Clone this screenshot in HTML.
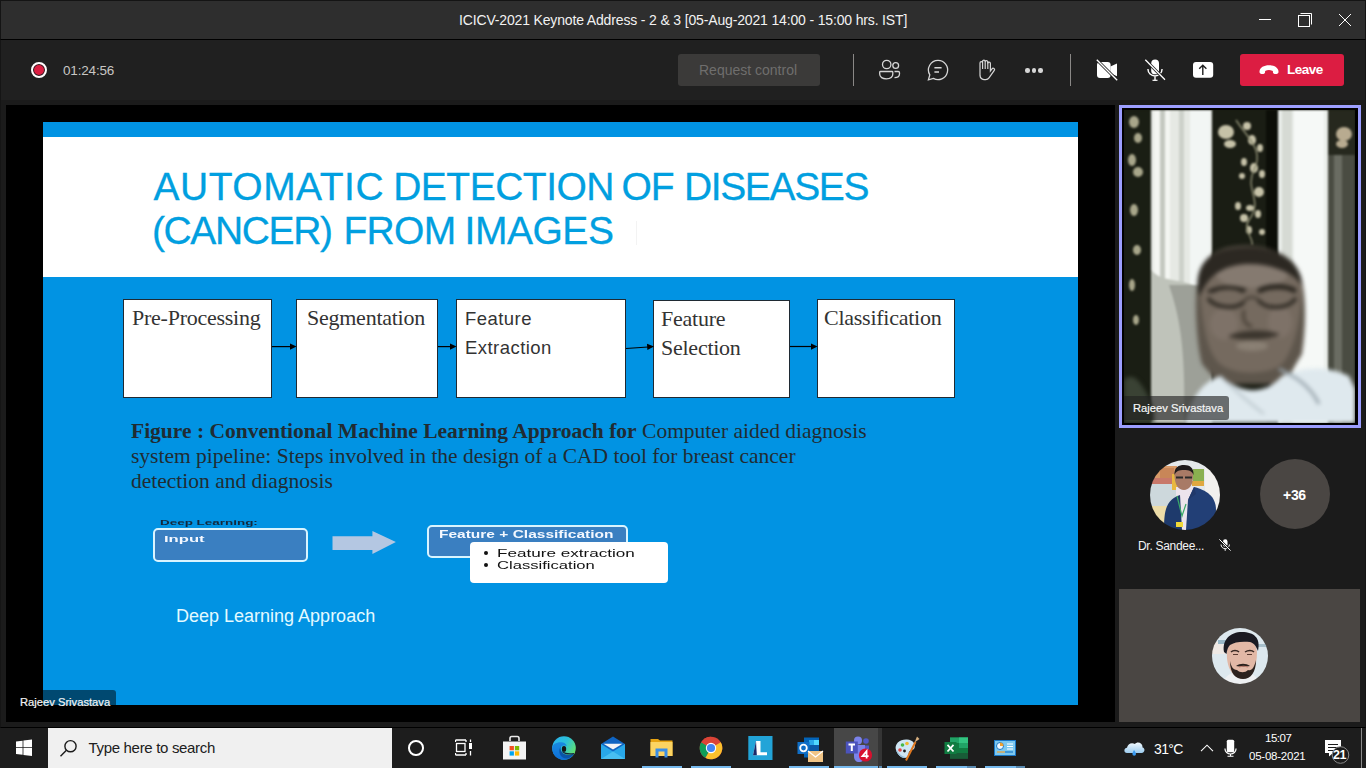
<!DOCTYPE html>
<html><head><meta charset="utf-8">
<style>
*{margin:0;padding:0;box-sizing:border-box}
html,body{width:1366px;height:768px;overflow:hidden;background:#161616;font-family:"Liberation Sans",sans-serif}
.a{position:absolute}
.t{position:absolute;white-space:nowrap;line-height:1}
.sv{font-family:"Liberation Serif",serif}
.ttl{font-size:39px;color:#019fe0;-webkit-text-stroke:0.3px #019fe0}
#titlebar{left:0;top:0;width:1366px;height:40px;background:#2e2e2e;border-top:1px solid #141414;border-left:1px solid #141414;border-right:1px solid #141414;border-bottom:1px solid #000}
#toolbar{left:0;top:40px;width:1366px;height:60px;background:#202020;border-left:1px solid #151515;border-right:1px solid #151515}
#stagewrap{left:0;top:100px;width:1366px;height:628px;background:#1b1b1b;border-left:1px solid #151515;border-right:1px solid #151515;border-bottom:1px solid #000}
#stage{left:6px;top:105px;width:1109px;height:617px;background:#000}
#slide{left:43px;top:122px;width:1035px;height:583px;background:#0193e3;overflow:hidden}
#taskbar{left:0;top:728px;width:1366px;height:40px;background:#1d1d1d}
</style></head><body>

<!-- TITLE BAR -->
<div id="titlebar" class="a"></div>
<div class="t" id="ttl" style="left:459px;top:13px;font-size:14px;letter-spacing:-0.155px;color:#f2f2f2">ICICV-2021 Keynote Address - 2 &amp; 3 [05-Aug-2021 14:00 - 15:00 hrs. IST]</div>
<div class="a" style="left:1259px;top:19px;width:12px;height:1px;background:#fff"></div>
<svg class="a" style="left:1296px;top:12px" width="18" height="17" viewBox="0 0 18 17"><path d="M4.5 1.5 H15.5 V12.5" fill="none" stroke="#fff" stroke-width="1"/><rect x="2.5" y="3.5" width="11" height="11" fill="none" stroke="#fff" stroke-width="1"/></svg>
<svg class="a" style="left:1338px;top:13px" width="14" height="14" viewBox="0 0 14 14"><path d="M1 1 L13 13 M13 1 L1 13" stroke="#fff" stroke-width="1"/></svg>

<!-- TOOLBAR -->
<div id="toolbar" class="a"></div>
<div class="a" style="left:31px;top:62px;width:16px;height:16px;border-radius:50%;border:2px solid #fff;background:#dc1e42;box-shadow:inset 0 0 0 1px #202020"></div>
<div class="t" id="timer" style="left:63px;top:63.5px;font-size:13.5px;letter-spacing:-0.17px;color:#c8c6c4">01:24:56</div>
<div class="a" style="left:678px;top:54px;width:142px;height:32px;border-radius:3px;background:#3b3a39"></div>
<div class="t" id="reqc" style="left:699px;top:63px;font-size:14px;color:#6f6e6d">Request control</div>
<div class="a" style="left:853px;top:54px;width:1px;height:32px;background:#8a8886"></div>
<!-- people -->
<svg class="a" style="left:878px;top:58px" width="24" height="24" viewBox="0 0 24 24" fill="none" stroke="#d6d6d6" stroke-width="1.3">
<circle cx="8.7" cy="6.5" r="4.2"/><circle cx="17.7" cy="7.5" r="2.9"/>
<path d="M2.5 13.5 h11.5 a0.8 0.8 0 0 1 0.8 0.8 v1.8 c0 3 -2.8 4.8 -6.5 4.8 s-6.6 -1.8 -6.6 -4.8 v-1.8 a0.8 0.8 0 0 1 0.8 -0.8z"/>
<path d="M16.5 13.5 h3.7 a1.3 1.3 0 0 1 1.3 1.3 v0.9 c0 2.4 -2 3.9 -5 3.9"/>
</svg>
<!-- chat -->
<svg class="a" style="left:926px;top:58px" width="24" height="24" viewBox="0 0 24 24" fill="none" stroke="#d6d6d6" stroke-width="1.3">
<path d="M12 2.4 a9.6 9.6 0 1 1 -4.6 18 l-5 1.4 l1.4 -4.9 A9.6 9.6 0 0 1 12 2.4z"/>
<path d="M8.4 9.8 h7.2 M8.4 14 h4.6" stroke-width="1.5"/>
</svg>
<!-- hand -->
<svg class="a" style="left:972.5px;top:58px" width="24" height="24" viewBox="0 0 24 24" fill="none" stroke="#d6d6d6" stroke-width="1.2">
<path d="M7 9.5 V5 a1.3 1.3 0 0 1 2.6 0 V3.4 a1.3 1.3 0 0 1 2.6 0 V4 a1.3 1.3 0 0 1 2.6 0 V5.4 a1.3 1.3 0 0 1 2.6 0 V13 l1.6 -2.2 a1.4 1.4 0 0 1 2.3 1.6 l-5.3 7.5 a4 4 0 0 1 -3.3 1.7 H11 a4.5 4.5 0 0 1 -4 -4.2z"/>
<path d="M9.6 5 v6 M12.2 3.5 v7.5 M14.8 4 v7" />
</svg>
<!-- more -->
<div class="a" style="left:1025px;top:68px;width:4.5px;height:4.5px;border-radius:50%;background:#d6d6d6"></div>
<div class="a" style="left:1031.7px;top:68px;width:4.5px;height:4.5px;border-radius:50%;background:#d6d6d6"></div>
<div class="a" style="left:1038.3px;top:68px;width:4.5px;height:4.5px;border-radius:50%;background:#d6d6d6"></div>
<div class="a" style="left:1070px;top:54px;width:1px;height:32px;background:#8a8886"></div>
<!-- camera off -->
<svg class="a" style="left:1095px;top:58px" width="24" height="24" viewBox="0 0 24 24">
<rect x="2" y="3.9" width="13.6" height="16.1" rx="3" fill="#fff"/>
<path d="M15.4 8.5 L22 5.6 V18.2 L15.4 15.3z" fill="#fff"/>
<path d="M1.5 1.5 L22.5 22.5" stroke="#202020" stroke-width="3"/>
<path d="M1.8 1.8 L22.2 22.2" stroke="#fff" stroke-width="1.3"/>
</svg>
<!-- mic off -->
<svg class="a" style="left:1143px;top:58px" width="24" height="24" viewBox="0 0 24 24">
<rect x="8.2" y="1.5" width="7.8" height="14.8" rx="3.9" fill="#fff"/>
<path d="M5 11 v0.5 a7 6.5 0 0 0 14 0 V11" fill="none" stroke="#fff" stroke-width="1.4"/>
<path d="M12 18.5 v4" stroke="#fff" stroke-width="1.4"/><path d="M9.5 22.3 h5" stroke="#fff" stroke-width="1.2"/>
<path d="M2 1.5 L22.2 22" stroke="#202020" stroke-width="3"/>
<path d="M2.3 1.8 L22 21.8" stroke="#fff" stroke-width="1.3"/>
</svg>
<!-- share -->
<svg class="a" style="left:1191px;top:58px" width="24" height="24" viewBox="0 0 24 24">
<rect x="2" y="4" width="20.2" height="15.8" rx="3" fill="#fff"/>
<path d="M11.8 17 V7.6 M8.2 10.8 L11.8 7.3 L15.4 10.8" fill="none" stroke="#202020" stroke-width="1.4"/>
</svg>
<!-- leave -->
<div class="a" style="left:1240px;top:54px;width:104px;height:32px;border-radius:3px;background:#dc1d42"></div>
<svg class="a" style="left:1258px;top:63px" width="22" height="13" viewBox="0 0 22 13">
<path d="M1.5 8.5 C1.8 4.5 6 2.3 11 2.3 S20.2 4.5 20.5 8.5 c0.1 1.6 -0.7 2.4 -2 2.4 h-1.8 c-1.2 0 -1.8 -0.7 -1.8 -1.8 v-1.1 c-1.2 -0.6 -2.5 -0.9 -3.9 -0.9 s-2.7 0.3 -3.9 0.9 v1.1 c0 1.1 -0.6 1.8 -1.8 1.8 H3.5 c-1.3 0 -2.1 -0.8 -2 -2.4z" fill="#fff"/>
</svg>
<div class="t" id="leave" style="left:1287px;top:63px;font-size:13.5px;letter-spacing:-0.5px;font-weight:bold;color:#fff">Leave</div>

<!-- STAGE -->
<div id="stagewrap" class="a"></div>
<div id="stage" class="a"></div>
<div id="slide" class="a"></div>
<div class="a" style="left:43px;top:137px;width:1035px;height:140px;background:#fff"></div>
<div class="t ttl" style="left:153.5px;top:167px;letter-spacing:0.5px">AUTOMATIC</div>
<div class="t ttl" style="left:393.2px;top:167px;letter-spacing:-0.5px">DETECTION</div>
<div class="t ttl" style="left:621.5px;top:167px;letter-spacing:-1.0px">OF</div>
<div class="t ttl" style="left:683.9px;top:167px;letter-spacing:-1.36px">DISEASES</div>
<div class="t ttl" style="left:152px;top:211px;letter-spacing:-1.39px">(CANCER)</div>
<div class="t ttl" style="left:343.5px;top:211px;letter-spacing:-0.73px">FROM</div>
<div class="t ttl" style="left:464.5px;top:211px;letter-spacing:-0.46px">IMAGES</div>
<div class="a" style="left:636px;top:221px;width:1px;height:24px;background:#f3f3f3"></div>
<!-- boxes -->
<div class="a" style="left:123px;top:299px;width:149px;height:99px;background:#fff;border:1px solid #1f2a33"></div>
<div class="a" style="left:296px;top:299px;width:142px;height:99px;background:#fff;border:1px solid #1f2a33"></div>
<div class="a" style="left:456px;top:299px;width:170px;height:99px;background:#fff;border:1px solid #1f2a33"></div>
<div class="a" style="left:653px;top:300px;width:137px;height:98px;background:#fff;border:1px solid #1f2a33"></div>
<div class="a" style="left:817px;top:299px;width:138px;height:99px;background:#fff;border:1px solid #1f2a33"></div>
<div class="t sv" id="b1" style="left:132px;top:307px;font-size:22px;letter-spacing:-0.25px;color:#333">Pre-Processing</div>
<div class="t sv" id="b2" style="left:307px;top:307px;font-size:22px;letter-spacing:-0.25px;color:#333">Segmentation</div>
<div class="t" id="b3a" style="left:465px;top:310px;font-size:18.5px;letter-spacing:0.45px;color:#333">Feature</div>
<div class="t" id="b3b" style="left:465px;top:339px;font-size:18.5px;letter-spacing:0.45px;color:#333">Extraction</div>
<div class="t sv" id="b4a" style="left:661px;top:308px;font-size:22px;letter-spacing:-0.25px;color:#333">Feature</div>
<div class="t sv" id="b4b" style="left:661px;top:337px;font-size:22px;letter-spacing:-0.25px;color:#333">Selection</div>
<div class="t sv" id="b5" style="left:824px;top:307px;font-size:22px;letter-spacing:-0.25px;color:#333">Classification</div>
<svg class="a" style="left:0;top:0" width="1366" height="768">
<g stroke="#000" stroke-width="1.2" fill="#000">
<path d="M272 346.6 H291"/><path d="M290 343.5 L296.5 346.6 L290 349.7z" stroke="none"/>
<path d="M438 346.6 H451"/><path d="M450 343.5 L456.5 346.6 L450 349.7z" stroke="none"/>
<path d="M626 348.5 L648 347"/><path d="M647 343.8 L654 346.6 L647.4 350z" stroke="none"/>
<path d="M790 346.5 H812"/><path d="M811 343.5 L817.5 346.6 L811 349.7z" stroke="none"/>
</g>
</svg>
<!-- caption -->
<div class="t sv" id="cap1" style="left:131px;top:421px;font-size:21.5px;color:#202c33"><b>Figure : Conventional Machine Learning Approach for</b> Computer aided diagnosis</div>
<div class="t sv" id="cap2" style="left:131px;top:446px;font-size:21.5px;color:#202c33">system pipeline: Steps involved in the design of a CAD tool for breast cancer</div>
<div class="t sv" id="cap3" style="left:131px;top:471px;font-size:21.5px;color:#202c33">detection and diagnosis</div>
<!-- deep learning -->
<div class="t" id="dl0" style="left:160px;top:519px;font-size:8px;font-weight:bold;color:#14283a;transform:scaleX(1.68);transform-origin:0 0">Deep Learning:</div>
<div class="a" style="left:152.5px;top:528px;width:155px;height:34px;border-radius:5px;background:#3a7fc1;border:2px solid #d8f4ff"></div>
<div class="t" id="dl1" style="left:164px;top:534px;font-size:9.5px;font-weight:bold;color:#f4f8ff;transform:scaleX(1.75);transform-origin:0 0">Input</div>
<svg class="a" style="left:330px;top:529px" width="70" height="28" viewBox="0 0 70 28"><path d="M2.5 7.3 H42.4 V2 L65.9 13 L42.4 25 V21 H2.5z" fill="#b4c7e2"/></svg>
<div class="a" style="left:427px;top:525px;width:201px;height:33px;border-radius:5px;background:#3a7fc1;border:2px solid #d8f4ff"></div>
<div class="t" id="dl2" style="left:439px;top:530px;font-size:10px;font-weight:bold;color:#f4f8ff;transform:scaleX(1.55);transform-origin:0 0">Feature + Classification</div>
<div class="a" style="left:470px;top:541.5px;width:197.5px;height:41.5px;border-radius:4px;background:#fff"></div>
<div class="a" style="left:484px;top:551px;width:4px;height:4px;border-radius:50%;background:#111"></div>
<div class="a" style="left:484px;top:563px;width:4px;height:4px;border-radius:50%;background:#111"></div>
<div class="t" id="dl3" style="left:496.5px;top:548.5px;font-size:10px;color:#111;transform:scaleX(1.71);transform-origin:0 0">Feature extraction</div>
<div class="t" id="dl4" style="left:497px;top:560.5px;font-size:10px;color:#111;transform:scaleX(1.66);transform-origin:0 0">Classification</div>
<div class="t" id="dl5" style="left:176px;top:607px;font-size:18px;color:#e4faff">Deep Learning Approach</div>
<!-- name label over stage -->
<div class="a" style="left:6px;top:690px;width:110px;height:32px;border-top-right-radius:3px;background:rgba(0,0,0,0.5)"></div>
<div class="t" id="nm1" style="left:20px;top:697px;font-size:11.2px;color:#f4f4f4;-webkit-text-stroke:0.2px #f4f4f4">Rajeev Srivastava</div>

<!-- RIGHT PANEL -->
<div class="a" style="left:1119px;top:105px;width:242px;height:323px;border:3px solid #9c9eff;background:#000"></div>
<div class="a" id="vid" style="left:1124px;top:110px;width:231px;height:313px;overflow:hidden;background:#1a1d14">
  <svg class="a" style="left:0;top:0;filter:blur(1.2px)" width="231" height="313" viewBox="0 0 231 313">
   <rect x="-5" y="-5" width="33" height="330" fill="#1a1e14"/>
   <path d="M27 -5 H88 V320 H27z" fill="#e6e9e4"/>
   <path d="M30 0 H46 V313 H30z" fill="#f4f6f2"/>
   <path d="M36 0 H41 V313 H36z" fill="#c4c8c0"/>
   <path d="M55 0 H60 V313 H55z" fill="#cdd1ca"/>
   <path d="M66 0 H86 V313 H66z" fill="#f2f6f4"/>
   <path d="M27 160 C40 175 60 165 88 185 V320 H27z" fill="#bfc3ba"/>
   <path d="M45 175 C55 205 62 235 60 313 H88 V175z" fill="#8e928a" opacity="0.7"/>
   <path d="M88 -5 H154 V320 H88z" fill="#1a1d14"/>
   <path d="M142 -5 H155 V320 H142z" fill="#0c0e08"/>
   <path d="M154 -5 H205 V320 H154z" fill="#eaeeea"/>
   <path d="M158 0 H168 V313 H158z" fill="#d6dad4"/>
   <path d="M170 0 H200 V313 H170z" fill="#f6f9f7"/>
   <path d="M204 -5 H236 V320 H204z" fill="#26281e"/>
   <path d="M204 45 H236 V320 H204z" fill="#4a4c42"/>
   <path d="M210 45 H218 V320 H210z" fill="#6a6c62"/>
   <g fill="#a8a68a">
    <ellipse cx="10" cy="12" rx="5" ry="6"/><ellipse cx="14" cy="28" rx="4" ry="5"/><ellipse cx="8" cy="50" rx="4" ry="6"/><ellipse cx="14" cy="62" rx="5" ry="5"/><ellipse cx="10" cy="100" rx="4" ry="6"/><ellipse cx="13" cy="140" rx="4" ry="5"/><ellipse cx="8" cy="175" rx="3" ry="6"/><ellipse cx="12" cy="210" rx="3" ry="5"/>
   </g>
   <g fill="#c6c2a8">
    <ellipse cx="102" cy="22" rx="8" ry="7"/><ellipse cx="106" cy="34" rx="6" ry="4"/>
    <ellipse cx="123" cy="16" rx="4" ry="4"/><ellipse cx="128" cy="30" rx="4" ry="5"/><ellipse cx="136" cy="38" rx="3" ry="4"/>
    <ellipse cx="120" cy="52" rx="3" ry="4"/><ellipse cx="130" cy="58" rx="4" ry="5"/><ellipse cx="138" cy="64" rx="3" ry="4"/><ellipse cx="118" cy="66" rx="3" ry="3"/>
    <ellipse cx="135" cy="82" rx="5" ry="5"/><ellipse cx="114" cy="96" rx="3" ry="4"/><ellipse cx="126" cy="98" rx="4" ry="3"/><ellipse cx="120" cy="108" rx="4" ry="4"/>
    <ellipse cx="134" cy="104" rx="3" ry="4"/><ellipse cx="125" cy="120" rx="3" ry="4"/><ellipse cx="138" cy="122" rx="3" ry="3"/>
   </g>
   <path d="M112 10 C125 30 140 40 130 60 C120 80 140 90 125 110 C118 120 130 128 128 135" stroke="#8a8a70" stroke-width="1.5" fill="none"/>
   <g fill="#b8ab90"><ellipse cx="220" cy="24" rx="8" ry="7"/><ellipse cx="218" cy="34" rx="6" ry="4"/></g>
  </svg>
  <svg class="a" style="left:0;top:0;filter:blur(2px)" width="231" height="313" viewBox="0 0 231 313">
   <path d="M0 270 C10 260 20 275 30 300 V313 H0z" fill="#3a4234"/>
   <g transform="translate(0,4)"><path d="M74 168 C70 180 72 230 78 250 L95 270 H160 L178 240 C184 200 180 170 176 160z" fill="#5e564c"/>
   <path d="M60 313 C66 285 78 268 96 262 C118 280 140 282 158 262 C176 254 200 250 225 262 L231 275 V313z" fill="#dfe9ee"/>
   <path d="M155 255 C170 262 185 270 195 290" stroke="#9aa6ae" stroke-width="3" fill="none"/>
   <path d="M96 262 C110 275 120 285 140 300" stroke="#b6c2c8" stroke-width="2" fill="none"/>
   </g><g transform="translate(0,4)"><path d="M76 175 C72 140 98 130 128 132 C158 134 180 150 178 178 C176 205 172 230 160 248 C148 262 110 262 96 250 C82 238 78 205 76 175z" fill="#756a5f"/><ellipse cx="128" cy="160" rx="36" ry="14" fill="#857a70"/><ellipse cx="100" cy="210" rx="14" ry="16" fill="#7e7268"/><ellipse cx="156" cy="208" rx="12" ry="16" fill="#7e7268"/>
   <path d="M74 178 C70 145 92 132 126 133 C156 134 178 148 178 172 C172 160 150 150 126 150 C102 150 84 160 76 182z" fill="#2c2822"/>
   <path d="M88 178 C96 173 110 172 122 176 M134 176 C146 170 160 170 172 176" stroke="#2a2620" stroke-width="3" fill="none"/>
   <path d="M84 184 C90 194 112 196 120 188 M134 186 C142 196 164 196 172 184 M84 178 C95 172 112 172 120 178 M134 178 C146 172 162 172 172 178" stroke="#2a261f" stroke-width="3.5" fill="none"/>
   <path d="M120 188 C122 182 132 182 134 186" stroke="#3a342c" stroke-width="2" fill="none"/>
   <path d="M120 196 C118 206 122 212 128 212" stroke="#4a4238" stroke-width="3" fill="none"/>
   <path d="M104 222 C116 216 140 214 156 220 C148 226 114 228 104 222z" fill="#3c362e"/>
   <ellipse cx="128" cy="232" rx="16" ry="5" fill="#8a8074"/></g>
  </svg>
</div>
<div class="a" style="left:1124px;top:396px;width:105px;height:24px;border-radius:0 3px 3px 0;background:rgba(30,30,30,0.62)"></div>
<div class="t" id="nm2" style="left:1133px;top:403px;font-size:11.2px;color:#f6f6f6;-webkit-text-stroke:0.2px #f6f6f6">Rajeev Srivastava</div>

<!-- avatars -->
<div class="a" id="av1" style="left:1150px;top:460px;width:70px;height:70px;border-radius:50%;overflow:hidden">
  <svg width="70" height="70" viewBox="0 0 70 70" style="filter:blur(0.6px)">
   <rect width="70" height="70" fill="#e4e8ea"/>
   <path d="M0 22 H26 V46 H0z" fill="#cdd8dc"/>
   <path d="M4 6 H27 V22 H4z" fill="#d89a68"/><path d="M10 8 H24 V20 H10z" fill="#c88658"/>
   <path d="M0 18 H26 V24 H0z" fill="#c8786a"/>
   <path d="M0 46 H20 V70 H0z" fill="#ecdca8"/>
   <path d="M43 9 H54 V22 H43z" fill="#8ab050"/><path d="M42 21 H54 V26 H42z" fill="#e0a840"/>
   <path d="M22 14 H30 V30 H22z" fill="#e8b840"/>
   <path d="M55 4 H70 V50 H55z" fill="#f2f0ee"/>
   <path d="M26 27 H46 V70 H26z" fill="#ece4ec"/>
   <path d="M14 70 C14 50 16 40 30 35 L32 70z" fill="#1e3a6c"/>
   <path d="M44 27 C56 30 66 36 66 50 C66 60 62 68 56 70 H36 L38 40z" fill="#223f76"/>
   <path d="M38 40 L44 27 L46 34z" fill="#20386a"/>
   <path d="M24.5 16 C24 8 29 5.5 34 5.5 C40 5.5 43.5 9 43 17 C43 25 39 30 34 30 C28.5 30 25 25 24.5 16z" fill="#a87a66"/>
   <path d="M24.5 15 C24 7 29 5 34 5 C40 5 44 8 43.5 15 C42 11 39 10 34 10 C29 10 26 11 24.5 15z" fill="#1e1a1a"/>
   <path d="M26 17.5 h7 M35 17.5 h7" stroke="#2a2a2a" stroke-width="2.2"/>
   <path d="M27 36 L32 56 L36 44" stroke="#3aa868" stroke-width="1.2" fill="none"/>
   <rect x="26" y="62" width="7" height="5" fill="#f0d838"/>
  </svg>
</div>
<div class="t" id="nm3" style="left:1138px;top:540px;font-size:12px;color:#f4f4f4;letter-spacing:-0.3px">Dr. Sandee...</div>
<svg class="a" style="left:1218px;top:538px" width="14" height="14" viewBox="0 0 14 14">
<rect x="5" y="1.3" width="4.5" height="7.5" rx="2.2" fill="#fff"/>
<path d="M3 6.5 a4.2 4.2 0 0 0 8.4 0" fill="none" stroke="#fff" stroke-width="1"/><path d="M7.2 10.8 v2" stroke="#fff" stroke-width="1"/>
<path d="M1.2 1.2 L12.8 12.8" stroke="#1b1b1b" stroke-width="2.2"/><path d="M1.4 1.4 L12.6 12.6" stroke="#fff" stroke-width="1"/>
</svg>
<div class="a" style="left:1260px;top:459px;width:70px;height:70px;border-radius:50%;background:#4a4643"></div>
<div class="t" id="p36" style="left:1283px;top:488px;font-size:14px;font-weight:bold;color:#fff;letter-spacing:-0.3px">+36</div>

<div class="a" style="left:1119px;top:589px;width:241px;height:133px;background:#4a4643"></div>
<div class="a" id="av2" style="left:1212px;top:628px;width:56px;height:56px;border-radius:50%;overflow:hidden">
  <svg width="56" height="56" viewBox="0 0 56 56" style="filter:blur(0.5px)">
   <rect width="56" height="56" fill="#dde8ee"/>
   <rect x="0" y="14" width="14" height="12" fill="#eee8e4"/>
   <rect x="6" y="12" width="10" height="4" fill="#9ab8c8"/>
   <rect x="44" y="16" width="12" height="3" fill="#a8c0cc"/>
   <path d="M10 56 C12 50 16 46 22 45 H36 C42 46 46 50 48 56z" fill="#eef0f2"/>
   <path d="M15 22 C14 36 18 48 30 51 C40 50 45 40 45 24 C44 14 38 10 30 10 C21 10 15 14 15 22z" fill="#e2b8a6"/>
   <path d="M12 24 C10 12 18 4 30 4 C42 4 49 10 46 23 C44 18 42 15 38 14 C30 13 22 14 18 17 C16 19 15 22 14.5 26z" fill="#1a1a22"/>
   <path d="M18 33 C18 46 24 51 31 51 C39 51 44 44 44 32 C42 40 40 43 36 42 C33 45 28 45 25 42 C21 42 19 38 18 33z" fill="#2c221e"/><path d="M24 38 C28 35 34 35 38 38 C34 39 28 39 24 38z" fill="#2c221e"/>
   <path d="M19 24 C21 22 25 22 27 24 M33 24 C36 22 40 22 42 24" stroke="#3a2a24" stroke-width="1.5" fill="none"/>
   <path d="M21 26.5 h5 M35 26.5 h5" stroke="#5a3a30" stroke-width="1.2"/>
   <path d="M27 39 C30 38 33 38 36 39" stroke="#c08070" stroke-width="1.2" fill="none"/>
  </svg>
</div>

<!-- TASKBAR -->
<div id="taskbar" class="a"></div>
<!-- windows logo -->
<svg class="a" style="left:15px;top:739px" width="18" height="18" viewBox="0 0 18 18" fill="#fff">
<path d="M1 2.6 L7.6 1.7 V8.3 H1z M8.4 1.6 L17 0.5 V8.3 H8.4z M1 9.1 H7.6 V15.8 L1 14.9z M8.4 9.1 H17 V17 L8.4 15.9z"/>
</svg>
<div class="a" style="left:48px;top:728px;width:344px;height:40px;background:#f0f0f0"></div>
<svg class="a" style="left:58px;top:738px" width="22" height="22" viewBox="0 0 22 22" fill="none" stroke="#1a1a1a" stroke-width="1.4">
<circle cx="12.5" cy="8.2" r="5.6"/><path d="M8.4 12.3 L2.5 18.2"/>
</svg>
<div class="t" id="srch" style="left:88.5px;top:740px;font-size:15px;color:#202020;letter-spacing:-0.32px">Type here to search</div>
<!-- cortana -->
<div class="a" style="left:408.2px;top:740.2px;width:15.6px;height:15.6px;border-radius:50%;border:2px solid #fff"></div>
<!-- task view -->
<svg class="a" style="left:455px;top:739px" width="18" height="17" viewBox="0 0 18 17" fill="none" stroke="#fff" stroke-width="1.3">
<path d="M0.5 1 H11 M0.5 16 H11 M0.5 1 V3 M11 1 V3 M0.5 16 V14 M11 16 V14"/><rect x="1.5" y="4.5" width="8.5" height="8"/>
<path d="M15.5 0.5 V3 M15.5 12 V16.5"/><rect x="14" y="4" width="3" height="6" fill="#fff" stroke="none"/>
</svg>
<!-- store -->
<svg class="a" style="left:502px;top:735px" width="25" height="25" viewBox="0 0 25 25">
<path d="M8 6 V3.2 Q8 1.5 9.7 1.5 H15.3 Q17 1.5 17 3.2 V6" fill="none" stroke="#eaeaea" stroke-width="1.6"/>
<path d="M1 6.5 H24 V24.5 H1z" fill="#f4f4f4"/>
<rect x="7.6" y="11" width="4.3" height="4.3" fill="#f25022"/><rect x="12.9" y="11" width="4.3" height="4.3" fill="#7fba00"/>
<rect x="7.6" y="16.3" width="4.3" height="4.3" fill="#00a4ef"/><rect x="12.9" y="16.3" width="4.3" height="4.3" fill="#ffb900"/>
</svg>
<!-- edge -->
<svg class="a" style="left:552px;top:736px" width="24" height="24" viewBox="0 0 24 24">
<defs><linearGradient id="eg1" x1="0" y1="0.2" x2="1" y2="0.8"><stop offset="0" stop-color="#2ab4ee"/><stop offset="0.45" stop-color="#2bc0d8"/><stop offset="1" stop-color="#6ee85a"/></linearGradient>
<linearGradient id="eg2" x1="0" y1="0" x2="0" y2="1"><stop offset="0" stop-color="#1a8ae0"/><stop offset="1" stop-color="#0c6ed8"/></linearGradient></defs>
<circle cx="12" cy="12" r="11.8" fill="url(#eg1)"/>
<path d="M0.2 12.5 C0.2 8.3 4 6.2 8.5 6.2 C12 6.2 14.5 7.8 14.6 10 C13.8 9.6 12.8 9.4 11.5 9.6 C9 10 7.8 12 8.3 14.5 C9.2 18 13.5 19.4 17.5 19 C19.2 18.8 20.8 18.3 22 17.8 C20 21.6 16.5 23.9 12 23.9 C5.5 23.9 0.2 19 0.2 12.5z" fill="url(#eg2)"/>
<path d="M8.6 10.8 C6.5 13.5 6.8 19 10.8 21.6 C14.5 23.8 19.5 22.2 22 17.8 C19 19.3 14 19.5 11 17.2 C9 15.6 8.2 13 8.6 10.8z" fill="#0b54a6"/>
<ellipse cx="12" cy="12.9" rx="2.2" ry="2.9" fill="#141414"/><path d="M10.5 15.5 C12.5 17.6 16.5 18.3 22 17.6" fill="none" stroke="#14243a" stroke-width="1.1"/>
</svg>
<!-- mail -->
<svg class="a" style="left:600px;top:736px" width="26" height="24" viewBox="0 0 26 24">
<path d="M1 8 L13 0.5 L25 8 V23 H1z" fill="#0f64c2"/>
<path d="M3.5 7.8 H22.5 L13 13.5z" fill="#f2f4f6"/>
<path d="M1 8 L13 15.5 L25 8 V23 H1z" fill="#28a8ea"/>
<path d="M1 23 L13 15.5 L25 23z" fill="#50c4f4" opacity="0.8"/>
</svg>
<!-- folder -->
<svg class="a" style="left:650px;top:738px" width="24" height="20" viewBox="0 0 24 20">
<path d="M0.5 1 H8 L10 2.5 H22.5 V18 H0.5z" fill="#e8a412"/>
<path d="M0.5 4 H22.5 V18 H0.5z" fill="#fcd462"/>
<path d="M5.5 19.5 V10.5 H17.5 V19.5 H14.5 V13.5 H8.5 V19.5z" fill="#3a8ee6"/>
</svg>
<div class="a" style="left:642px;top:766px;width:40px;height:2px;background:#76b9ed"></div>
<!-- chrome -->
<svg class="a" style="left:699px;top:736px" width="24" height="24" viewBox="0 0 24 24">
<circle cx="12" cy="12" r="11.3" fill="#db4437"/>
<path d="M12 12 L21.8 6.35 A11.3 11.3 0 0 1 6.35 21.8z" fill="#fbc02d"/>
<path d="M12 12 L6.35 21.8 A11.3 11.3 0 0 1 2.2 6.35 z" fill="#0f9d58"/>
<path d="M12 12 L2.2 6.35 A11.3 11.3 0 0 1 12 0.7z" fill="#db4437"/>
<circle cx="12" cy="12" r="5.2" fill="#fff"/><circle cx="12" cy="12" r="4.1" fill="#4285f4"/>
</svg>
<div class="a" style="left:691px;top:766px;width:40px;height:2px;background:#76b9ed"></div>
<!-- L -->
<svg class="a" style="left:747.5px;top:736px" width="25" height="24" viewBox="0 0 25 24">
<rect x="0.3" y="0" width="24.2" height="24" fill="#22a4d8"/>
<path d="M8 5 H12.5 V16.2 H19 V19.2 H5z" fill="#fff"/><path d="M8 5 L5 19.2 H8.8z" fill="#1a2a6a"/>
</svg>
<!-- outlook -->
<svg class="a" style="left:797px;top:737px" width="27" height="26" viewBox="0 0 27 26">
<rect x="7" y="0.5" width="15" height="20" fill="#0364b8"/>
<rect x="12" y="3" width="10" height="5" fill="#28a8ea"/><rect x="17" y="3" width="5" height="5" fill="#50d9ff"/><rect x="12" y="8" width="10" height="6" fill="#0a5aa8"/>
<rect x="0.5" y="5" width="12" height="12" fill="#0f6ec6"/>
<circle cx="6.5" cy="11" r="3.3" fill="none" stroke="#fff" stroke-width="1.8"/>
<rect x="11" y="14" width="15" height="11" fill="#f0c486"/>
<path d="M11 14 L18.5 20 L26 14" fill="none" stroke="#fff" stroke-width="1.3"/>
</svg>
<div class="a" style="left:789px;top:766px;width:40px;height:2px;background:#76b9ed"></div>
<!-- teams active -->
<div class="a" style="left:834px;top:728px;width:44px;height:40px;background:#474747"></div>
<div class="a" style="left:878px;top:728px;width:4px;height:40px;background:#353535"></div>
<svg class="a" style="left:845px;top:736px" width="28" height="27" viewBox="0 0 28 27">
<circle cx="13" cy="4.5" r="4" fill="#7b83eb"/><circle cx="21" cy="5" r="2.8" fill="#5059c9"/>
<path d="M9 9 H20 V20 C20 24 17 26 14 26 C11 26 9 24 9 20z" fill="#7b83eb"/>
<path d="M20 9.5 H24 V17 C24 19 22 20.5 20 20.5z" fill="#5059c9"/>
<rect x="0.8" y="5.5" width="12" height="12" fill="#4b53bc"/>
<path d="M3.5 8.5 H10 M6.8 8.5 V15" stroke="#fff" stroke-width="2"/>
<circle cx="20.5" cy="19" r="6.6" fill="#d8102e"/>
<path d="M21.6 22.6 V15.2 L17.4 20.2 H23.6" fill="none" stroke="#fff" stroke-width="1.7"/>
</svg>
<div class="a" style="left:834px;top:766px;width:44px;height:2px;background:#76b9ed"></div>
<div class="a" style="left:879px;top:766px;width:3px;height:2px;background:#5a8ab0"></div>
<!-- paint -->
<svg class="a" style="left:894px;top:736px" width="26" height="25" viewBox="0 0 26 25">
<path d="M2 14 C0 8 6 3 13 3.5 C19 4 22 8 20.5 12 C19.5 14.5 16 14 15 16 C14 18 16 20 13 21.5 C8 23.5 3.5 19 2 14z" fill="#cfe6f4"/>
<path d="M2 14 C3.5 19 8 23.5 13 21.5 C10 21 5 19 3 14z" fill="#98c0dc"/>
<circle cx="6" cy="14" r="1.8" fill="#e04848"/><circle cx="8.5" cy="9" r="1.8" fill="#48b848"/><circle cx="13" cy="7.5" r="1.8" fill="#f0b830"/>
<circle cx="10.5" cy="15" r="1.4" fill="#1c1c1c"/>
<path d="M12 24.5 L21.5 6" stroke="#e07820" stroke-width="2"/>
<path d="M20.5 6.5 L23 0.5 L25.5 3 z" fill="#d8b080"/>
</svg>
<div class="a" style="left:887px;top:766px;width:40px;height:2px;background:#76b9ed"></div>
<!-- excel -->
<svg class="a" style="left:944px;top:737px" width="25" height="22" viewBox="0 0 25 22">
<rect x="6" y="0.5" width="18" height="21" fill="#107c41"/>
<rect x="6" y="0.5" width="18" height="5.5" fill="#21a366"/><rect x="15" y="0.5" width="9" height="5.5" fill="#33c481"/>
<rect x="15" y="6" width="9" height="5" fill="#21a366"/><rect x="6" y="16" width="18" height="5.5" fill="#185c37"/>
<rect x="0.5" y="5" width="12" height="12" fill="#107c41"/>
<path d="M3.5 7.8 L9.5 14.5 M9.5 7.8 L3.5 14.5" stroke="#fff" stroke-width="1.8"/>
</svg>
<div class="a" style="left:936px;top:766px;width:31px;height:2px;background:#76b9ed"></div>
<div class="a" style="left:967px;top:766px;width:9px;height:2px;background:#5a8ab0"></div>
<!-- cp -->
<svg class="a" style="left:994px;top:740px" width="22" height="16" viewBox="0 0 22 16">
<rect x="0.5" y="0.5" width="21" height="15" fill="#7cc8f0" stroke="#1a78c8" stroke-width="1"/>
<circle cx="6" cy="6" r="3.5" fill="#f0f8ff" stroke="#1a78c8" stroke-width="1"/><path d="M6 6 V2.5 A3.5 3.5 0 0 1 9.5 6z" fill="#f0a030"/>
<path d="M13 4 h6 M13 6.5 h6 M13 9 h6" stroke="#fff" stroke-width="1.2"/>
<path d="M3 12 h8" stroke="#f0a030" stroke-width="1.2"/><path d="M11 12 h8" stroke="#1a78c8" stroke-width="1.2"/>
</svg>
<div class="a" style="left:985px;top:766px;width:31px;height:2px;background:#76b9ed"></div>
<div class="a" style="left:1016px;top:766px;width:9px;height:2px;background:#5a8ab0"></div>
<!-- tray -->
<svg class="a" style="left:1123px;top:740px" width="22" height="17" viewBox="0 0 22 17">
<defs><linearGradient id="cg" x1="0" y1="0" x2="0" y2="1"><stop offset="0" stop-color="#f4fbff"/><stop offset="1" stop-color="#9ccbee"/></linearGradient></defs>
<path d="M4 13 C0.5 13 0.5 8 4 7.8 C4.5 3.5 9 2 12 4 C14 1 20 2.5 19.5 7.5 C22.5 8 22 13 18.5 13z" fill="url(#cg)"/>
<path d="M11 10 C12.5 12 13 13 13 14 A1.8 1.8 0 0 1 9.4 14 C9.4 13 10 12 11 10z" fill="#3a9af0"/>
</svg>
<div class="t" id="temp" style="left:1154px;top:742px;font-size:14px;color:#fff;letter-spacing:-0.6px">31°C</div>
<svg class="a" style="left:1200px;top:744px" width="14" height="8" viewBox="0 0 14 8"><path d="M1 7.2 L7 1.2 L13 7.2" fill="none" stroke="#fff" stroke-width="1.1"/></svg>
<svg class="a" style="left:1224px;top:739px" width="13" height="18" viewBox="0 0 13 18">
<rect x="2.8" y="0.8" width="7.4" height="12.4" rx="1.5" fill="#fff"/>
<path d="M1 9.5 V10 a5.5 5 0 0 0 11 0 V9.5" fill="none" stroke="#fff" stroke-width="1.2"/><path d="M6.5 15 V17 M3.5 17.2 H9.5" stroke="#fff" stroke-width="1.1"/>
</svg>
<div class="t" id="clk1" style="left:1265px;top:732.5px;font-size:11.5px;color:#fff;letter-spacing:-0.5px">15:07</div>
<div class="t" id="clk2" style="left:1249px;top:750.5px;font-size:11.5px;color:#fff;letter-spacing:-0.23px">05-08-2021</div>
<svg class="a" style="left:1324px;top:739px" width="28" height="27" viewBox="0 0 28 27">
<path d="M1 1 H17 V14 H9 L5 17.5 V14 H1z" fill="#fff"/>
<path d="M4 5.5 H14 M4 8.5 H14 M4 11.5 H11" stroke="#1c1c1c" stroke-width="1.2"/>
<circle cx="16.5" cy="16" r="8.3" fill="#1c1c1c" stroke="#8a8a8a" stroke-width="1"/>
</svg>
<div class="t" id="ntf" style="left:1333px;top:749px;font-size:12.5px;font-weight:bold;color:#fff;letter-spacing:-0.4px">21</div>
<div class="a" style="left:1361px;top:728px;width:1px;height:40px;background:#8a8a8a"></div>

</body></html>
